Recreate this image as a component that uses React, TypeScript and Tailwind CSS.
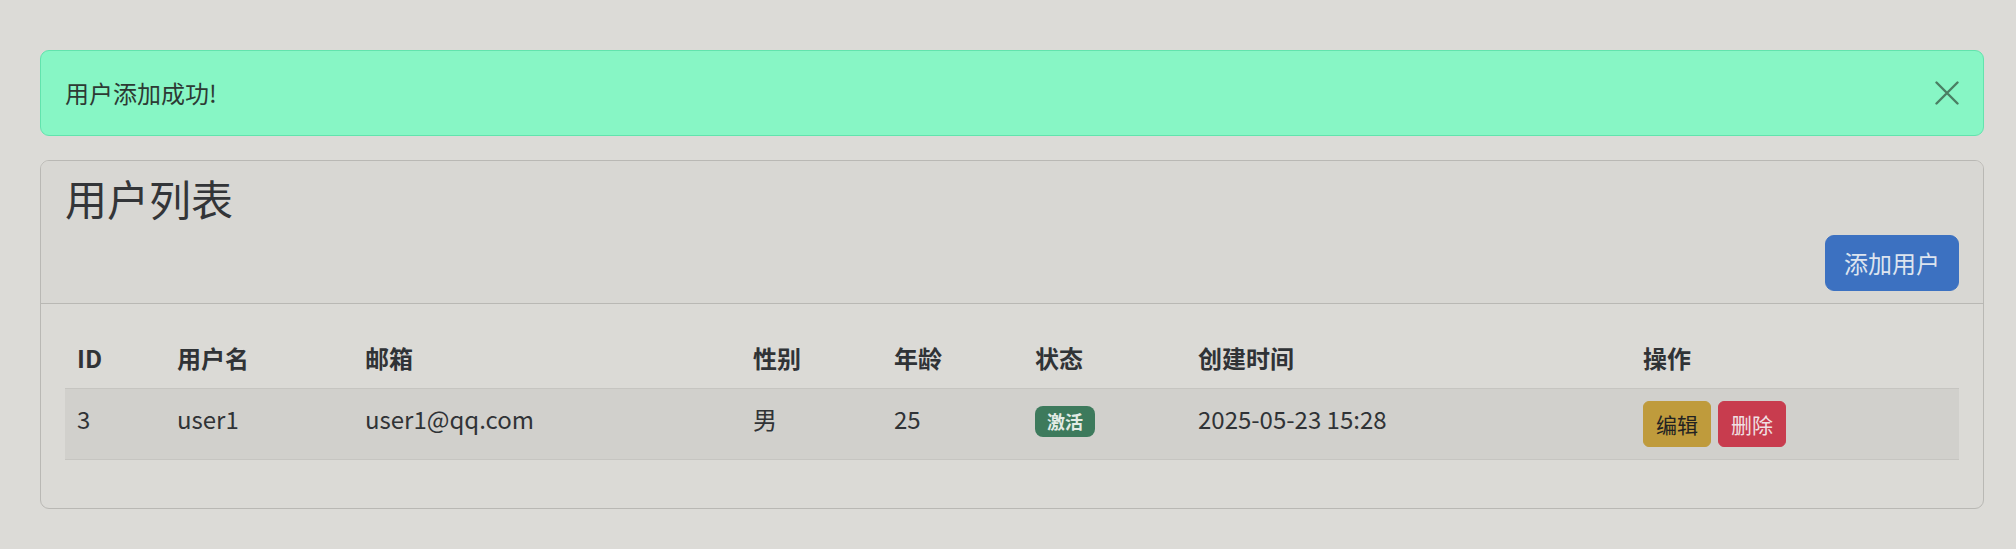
import React from "react";

interface User {
    id: number;
    username: string;
    email: string;
    gender: string;
    age: number;
    active: boolean;
    createdAt: string;
}

const users: User[] = [
    {id: 3, username: "user1", email: "user1@qq.com", gender: "男", age: 25, active: true, createdAt: "2025-05-23 15:28"},
];

const CloseIcon = () => (
    <svg width="24" height="24" viewBox="0 0 24 24" fill="none">
        <path d="M1.5 1.5 L22.5 22.5 M22.5 1.5 L1.5 22.5" stroke="#4a7e63" strokeWidth="2.4" strokeLinecap="round"/>
    </svg>
);

export default function App() {
    const font = {fontFamily: '"Noto Sans CJK SC", "Noto Sans", sans-serif'};

    return (
        <div className="min-h-screen bg-[#dcdbd7] pt-[50px] pl-[40px] pr-[32px] text-[#303336]" style={font}>
            {/* alert */}
            <div className="flex items-center justify-between h-[86px] mb-[24px] px-[24px] bg-[#87f6c5] border border-[#62e3ad] rounded-[9px]">
                <span className="text-[24px] leading-[36px] text-[#2d3a34]">用户添加成功!</span>
                <button className="w-[24px] h-[24px] mr-0">
                    <CloseIcon/>
                </button>
            </div>

            {/* card */}
            <div className="border border-[#b9b8b4] rounded-[9px] bg-[#dbdad6] overflow-hidden">
                <div className="px-[24px] py-[12px] bg-[#d8d7d3] border-b border-[#b9b8b4]">
                    <h3 className="text-[42px] leading-[50px] mb-[12px] font-normal text-[#333538]">用户列表</h3>
                    <div className="flex justify-end">
                        <button className="h-[56px] px-[18px] text-[24px] leading-[36px] text-[#dde4ef] bg-[#3c71c1] border border-[#3c71c1] rounded-[9px]">
                            添加用户
                        </button>
                    </div>
                </div>

                <div className="p-[24px]">
                    <table className="w-full table-fixed border-collapse text-[24px] leading-[36px] mb-[24px]">
                        <colgroup>
                            <col className="w-[100px]"/>
                            <col className="w-[188px]"/>
                            <col className="w-[388px]"/>
                            <col className="w-[141px]"/>
                            <col className="w-[141px]"/>
                            <col className="w-[163px]"/>
                            <col className="w-[445px]"/>
                            <col className="w-[328px]"/>
                        </colgroup>
                        <thead>
                        <tr className="border-b border-[#c6c5c1]">
                            {["ID", "用户名", "邮箱", "性别", "年龄", "状态", "创建时间", "操作"].map((h) => (
                                <th key={h} className="p-[12px] text-left align-top font-bold">{h}</th>
                            ))}
                        </tr>
                        </thead>
                        <tbody>
                        {users.map((u) => (
                            <tr key={u.id} className="bg-[#d1d0cc] border-b border-[#c6c5c1]">
                                <td className="p-[12px] align-top">{u.id}</td>
                                <td className="p-[12px] align-top">{u.username}</td>
                                <td className="p-[12px] align-top">{u.email}</td>
                                <td className="p-[12px] align-top">{u.gender}</td>
                                <td className="p-[12px] align-top">{u.age}</td>
                                <td className="p-[12px] align-top">
                                    {u.active && (
                                        <span className="inline-block px-[12px] py-[6px] text-[18px] leading-[19px] font-bold text-[#e2ebe5] bg-[#3d7a5c] rounded-[8px]">
                                            激活
                                        </span>
                                    )}
                                </td>
                                <td className="p-[12px] align-top">{u.createdAt}</td>
                                <td className="p-[12px] align-top">
                                    <div className="flex gap-[7px]">
                                        <button className="h-[46px] px-[12px] text-[21px] leading-[31px] text-[#222] bg-[#bf9b3c] border border-[#bf9b3c] rounded-[6px]">
                                            编辑
                                        </button>
                                        <button className="h-[46px] px-[12px] text-[21px] leading-[31px] text-[#f0e0e3] bg-[#c83c4e] border border-[#c83c4e] rounded-[6px]">
                                            删除
                                        </button>
                                    </div>
                                </td>
                            </tr>
                        ))}
                        </tbody>
                    </table>
                </div>
            </div>
        </div>
    );
}
